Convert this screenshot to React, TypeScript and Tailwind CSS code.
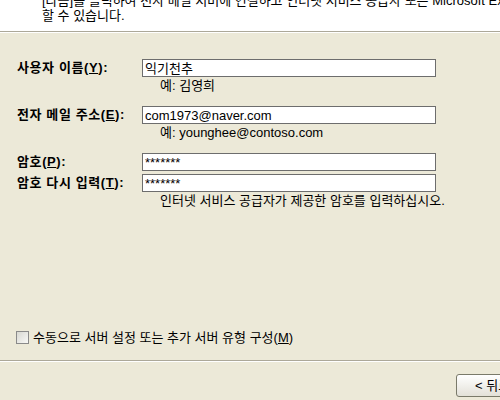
import React from "react";

const FONT = "font-['Liberation_Sans','Noto_Sans_CJK_KR',sans-serif]";

function Field({ label, u, value, mt }: { label: string; u: string; value: string; mt: string }) {
  return (
    <div className={`flex items-center h-[18px] ${mt}`}>
      <div className="w-[142px] pl-[17px] font-bold text-[13px] leading-[18px] tracking-[0.6px] text-black whitespace-nowrap">
        {label}(<span className="underline">{u}</span>):
      </div>
      <div className="w-[294px] h-[18px] bg-white border border-[#6d6d6d] flex items-center px-[2px] text-[13px] text-black leading-none whitespace-nowrap overflow-hidden">
        {value}
      </div>
    </div>
  );
}

export default function App() {
  return (
    <div className={`w-[500px] h-[400px] overflow-hidden bg-[#ECE9D8] ${FONT} text-[13px] text-black`}>
      {/* top: white description panel */}
      <div className="h-[31px] bg-white overflow-hidden">
        <div className="pl-[42px] -mt-[7px] leading-[15px] whitespace-nowrap">
          <div>[다음]을 클릭하여 전자 메일 서버에 연결하고 인터넷 서비스 공급자 또는 Microsoft Exchange</div>
          <div>할 수 있습니다.</div>
        </div>
      </div>
      <div className="h-px bg-[#ACA899]" />
      <div className="h-px bg-white" />

      {/* form */}
      <div className="pt-[26px]">
        <Field label="사용자 이름" u="Y" value="익기천추" mt="" />
        <div className="pl-[160px] h-[29px] pt-[1px] leading-[15px]">예: 김영희</div>
        <Field label="전자 메일 주소" u="E" value="com1973@naver.com" mt="" />
        <div className="pl-[160px] h-[29px] pt-[1px] leading-[15px]">예: younghee@contoso.com</div>
        <Field label="암호" u="P" value="*******" mt="" />
        <Field label="암호 다시 입력" u="T" value="*******" mt="mt-[3px]" />
        <div className="pl-[160px] h-[16px] pt-[1px] leading-[15px]">인터넷 서비스 공급자가 제공한 암호를 입력하십시오.</div>
      </div>

      {/* checkbox */}
      <div className="flex items-center gap-[4px] pl-[16px] h-[15px] leading-[15px] mt-[122px]">
        <div className="w-[13px] h-[13px] border border-[#8a8a8a] bg-gradient-to-br from-[#d8d8d2] to-[#f8f8f6]" />
        <span>
          수동으로 서버 설정 또는 추가 서버 유형 구성(<span className="underline">M</span>)
        </span>
      </div>

      {/* bottom separator + buttons */}
      <div className="mt-[15px] h-px bg-[#ACA899]" />
      <div className="h-px bg-white" />
      <div className="flex justify-end pt-[12px]">
        <div className="mr-[-40px] w-[84px] h-[23px] rounded-[3px] border border-[#7a7a6a] bg-gradient-to-b from-white to-[#e3e1d8] flex items-center pl-[18px] whitespace-nowrap">
          &lt; 뒤로(<span className="underline">B</span>)
        </div>
      </div>
    </div>
  );
}
